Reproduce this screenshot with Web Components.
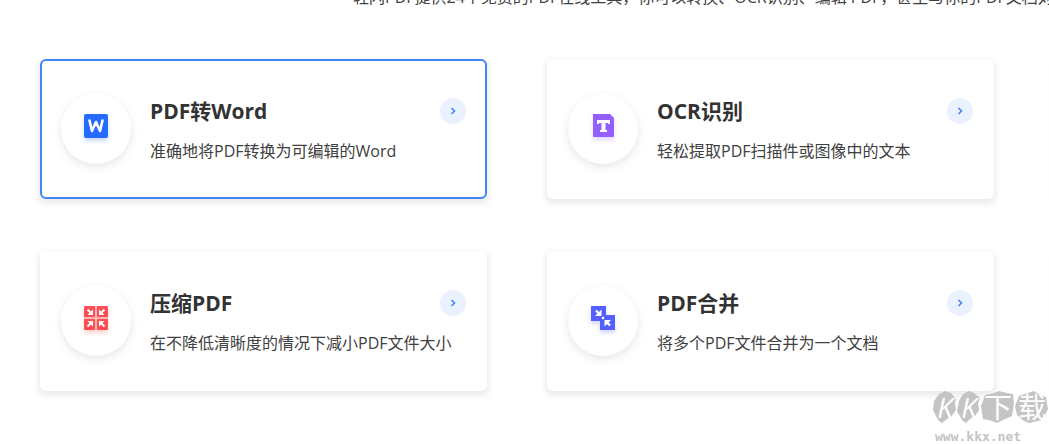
<!DOCTYPE html>
<html lang="zh-CN">
<head>
<meta charset="utf-8">
<title>PDF 在线工具</title>
<style>
  html, body { margin: 0; background: #fff; }
  body { font-family: "Open Sans", "Noto Sans CJK SC", sans-serif; color: #333; }
</style>
</head>
<body>
<tools-page></tools-page>

<template id="tools-page-t">
  <style>
    :host { display: block; position: relative; overflow: hidden; min-height: 100vh; }
    .intro { margin: -15px 0 0; padding-left: 353px; font-size: 16px; line-height: 24px; white-space: nowrap; color: #404040; }
    .grid { display: grid; grid-template-columns: minmax(0, 1fr) minmax(0, 1fr) 0; gap: 52px 60px; margin: 50px -5px 0 40px; }
    .peek { width: 200px; }
    kk-mark { position: absolute; right: 0; top: 390px; }
  </style>
  <p class="intro">轻闪PDF提供24个免费的PDF在线工具，你可以转换、OCR识别、编辑 PDF，甚至与你的PDF文档对话</p>
  <main class="grid">
    <tool-card active>
      <svg slot="icon" width="40" height="40" viewBox="0 0 40 40" style="filter:drop-shadow(0 3px 2px #246bff40)"><rect x="8" y="8" width="24" height="24" rx="2" fill="#246bff"/><path d="M13.500 14.500l2.500 10.500 4-9 4 9 2.500-10.500" fill="none" stroke="#fff" stroke-width="2.600" stroke-linejoin="round" stroke-linecap="round"/></svg>
      <span slot="title">PDF转Word</span>
      <span slot="text">准确地将PDF转换为可编辑的Word</span>
    </tool-card>
    <tool-card>
      <svg slot="icon" width="40" height="40" viewBox="0 0 40 40" style="filter:drop-shadow(0 3px 2px #9360ff40)"><path d="M10 8h17l4 4v18q0 1-1 1H11q-1 0-1-1z" fill="#9360ff"/><path d="M14 14h13v4h-2v-1h-2.500v7h1.500v2h-7v-2h1.500v-7h-2.500v1h-2z" fill="#fff"/></svg>
      <span slot="title">OCR识别</span>
      <span slot="text">轻松提取PDF扫描件或图像中的文本</span>
    </tool-card>
    <tool-card class="peek" aria-hidden="true"></tool-card>
    <tool-card>
      <svg slot="icon" width="40" height="40" viewBox="0 0 40 40" style="filter:drop-shadow(0 3px 2px #ff4d5140)"><rect x="8" y="8" width="24" height="24" rx="1" fill="#ffb3b5"/><g fill="#ff4d51"><rect x="8" y="8" width="11" height="11" rx="1"/><rect x="21" y="8" width="11" height="11" rx="1"/><rect x="8" y="21" width="11" height="11" rx="1"/><rect x="21" y="21" width="11" height="11" rx="1"/></g><path d="M11.500 11.500l4 4M28.500 11.500l-4 4M11.500 28.500l4-4M28.500 28.500l-4-4" stroke="#fff" stroke-width="2"/><path fill="#fff" d="M17 11.500v5.500h-5.500zM23 11.500v5.500h5.500zM17 28.500v-5.500h-5.500zM23 28.500v-5.500h5.500z"/></svg>
      <span slot="title">压缩PDF</span>
      <span slot="text">在不降低清晰度的情况下减小PDF文件大小</span>
    </tool-card>
    <tool-card>
      <svg slot="icon" width="40" height="40" viewBox="0 0 40 40" style="filter:drop-shadow(0 3px 2px #535fff40)"><path d="M8 8h15v9h9v15H17v-9H8z" fill="#535fff"/><path d="M13 12.500l4 4M27 27.500l-4-4" stroke="#fff" stroke-width="2.400"/><path d="M18.500 11.500v6.500h-6.500zM21.500 28.500v-6.500h6.500z" fill="#fff"/><circle cx="20" cy="20" r="1.300" fill="#fff"/></svg>
      <span slot="title">PDF合并</span>
      <span slot="text">将多个PDF文件合并为一个文档</span>
    </tool-card>
    <tool-card class="peek" aria-hidden="true"></tool-card>
  </main>
  <kk-mark></kk-mark>
</template>

<template id="tool-card-t">
  <style>
    :host { display: block; }
    .card { display: flex; align-items: flex-start; box-sizing: border-box; min-height: 140px; padding: 33px 19px 0; border: 2px solid transparent; border-radius: 6px; background: #fff; box-shadow: 0 3px 6px 2px rgba(0,0,0,.08); color: inherit; text-decoration: none; }
    :host([active]) .card { border-color: #4285f4; }
    .disc { display: grid; place-items: center; flex: none; width: 70px; height: 70px; border-radius: 50%; box-shadow: 0 3px 10px rgba(0,0,0,.1); }
    .disc ::slotted(svg) { display: block; margin-top: -6px; }
    .body { flex: 1; min-width: 0; padding-left: 19px; }
    h3 { margin: 2px 0 13px; font-size: 21px; line-height: 30px; font-weight: 700; }
    p { margin: 0; font-size: 16px; line-height: 24px; color: #404040; white-space: nowrap; }
    .go { display: grid; place-items: center; flex: none; width: 26px; height: 26px; margin-top: 4px; border-radius: 50%; background: #ebf2ff; }
  </style>
  <a class="card" href="#">
    <span class="disc"><slot name="icon"></slot></span>
    <div class="body"><h3><slot name="title"></slot></h3><p><slot name="text"></slot></p></div>
    <span class="go"><svg width="6" height="8" viewBox="0 0 6 8"><path d="M1.500 1l3 3-3 3" fill="none" stroke="#4285f4" stroke-width="1.600"/></svg></span>
  </a>
</template>

<template id="kk-mark-t">
  <style>
    :host { display: block; width: 116px; color: #c4c4c4; }
    .logo { position: relative; height: 39px; }
    svg { position: absolute; inset: 0; }
    .name { position: relative; display: flex; color: #fff; font-size: 28px; line-height: 34px; }
    .name span { flex: 0 0 24px; text-align: center; }
    .name .k { font-style: italic; }
    .name .wide { flex-basis: 34px; }
    .site { font: bold 13px/16px "DejaVu Sans Mono", monospace; padding-left: 2px; }
  </style>
  <div class="logo">
    <svg width="116" height="34" viewBox="0 0 116 34" fill="#c4c4c4"><path d="M6 4l6-3 6 2 5 6-1 5 1 6-5 7-4 2-5 4-4-3-5-10 1-9zM30 4l6-3 5 2 6 5-2 6 1 6-4 6-5 3-4 4-4-3-5-9 2-10zM52 5l9-2 5-2 8 2 6 1 1 9-2 13-9 4-6 3-8-3-6-1-2-13zM86 6l6-2 9-3 6 4 6 2 2 12-3 6-3 5-13 3-5-2-7-6-2-9z"/></svg>
    <div class="name"><span class="k">K</span><span class="k">K</span><span class="wide">下</span><span class="wide">载</span></div>
  </div>
  <div class="site">www.kkx.net</div>
</template>

<script>
  for (const name of ['kk-mark', 'tool-card', 'tools-page']) {
    customElements.define(name, class extends HTMLElement {
      constructor() {
        super();
        this.attachShadow({ mode: 'open' }).append(document.getElementById(name + '-t').content.cloneNode(true));
      }
    });
  }
</script>
</body>
</html>
